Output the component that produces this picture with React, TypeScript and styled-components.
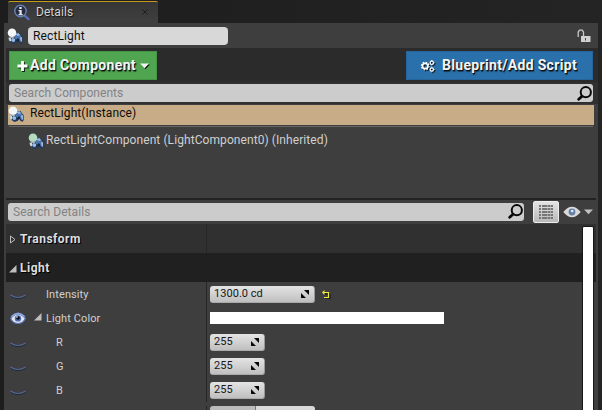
import React from "react";
import styled, { createGlobalStyle } from "styled-components";

const Global = createGlobalStyle`
  * { box-sizing: border-box; }
  body {
    margin: 0;
    background: #202020;
    font-family: Roboto, "Liberation Sans", sans-serif;
    font-size: 12px;
    overflow: hidden;
  }
  svg { display: block; flex: none; }
`;

const Window = styled.div`
  width: 602px;
  height: 410px;
  overflow: hidden;
  display: flex;
  flex-direction: column;
  background: linear-gradient(90deg, #1d1d1d, #242424);
`;

const TabStrip = styled.div`
  height: 23px;
  flex: none;
  padding: 1px 0 0 8px;
`;

const Tab = styled.div`
  display: flex;
  align-items: center;
  width: 150px;
  height: 22px;
  padding: 0 10px 1px 5px;
  border-top: 1px solid #c59b19;
  border-radius: 2px 2px 0 0;
  background: linear-gradient(#363636, #404040);
`;

const TabTitle = styled.span`
  margin-left: 6px;
  flex: 1;
  color: #d2d2d2;
  letter-spacing: 0.06px;
  text-shadow: 1px 1px 1px #111;
`;

const Panel = styled.div`
  flex: 1;
  width: 594px;
  margin-left: 4px;
  display: flex;
  flex-direction: column;
  background: #3e3e3e;
`;

const NameBar = styled.div`
  height: 25px;
  flex: none;
  display: flex;
  align-items: center;
  padding: 0 7px 0 3px;
`;

const NameField = styled.div`
  width: 200px;
  height: 18px;
  margin: 0 auto 0 5px;
  padding-left: 5px;
  line-height: 18px;
  border-radius: 4px;
  background: #d8d8d8;
  color: #111;
  letter-spacing: 0.12px;
`;

const Toolbar = styled.div`
  height: 34px;
  flex: none;
  display: flex;
  justify-content: space-between;
  margin-left: 2px;
  padding: 3px 5px 2px 3px;
  background: #2b2b2b;
`;

const ActionButton = styled.div<{ $tone: "green" | "blue" }>`
  display: flex;
  align-items: center;
  width: ${(p) => (p.$tone === "green" ? 148 : 187)}px;
  height: 29px;
  padding-left: ${(p) => (p.$tone === "green" ? 7 : 13)}px;
  background: ${(p) => (p.$tone === "green" ? "#50a650" : "#2a70aa")};
  border: 1px solid ${(p) => (p.$tone === "green" ? "#459345" : "#25659b")};
  svg { filter: drop-shadow(1px 1px 0 rgba(0, 0, 0, 0.8)); }
`;

const ActionLabel = styled.span<{ $gap: number; $spacing: number }>`
  margin: 0 4px 1px ${(p) => p.$gap}px;
  color: #f4f4f4;
  font-size: 14px;
  font-weight: 700;
  letter-spacing: ${(p) => p.$spacing}px;
  text-shadow: 1px 1px 0 #101010, 1px 2px 1px rgba(0, 0, 0, 0.5);
  white-space: nowrap;
`;

const SearchRow = styled.div<{ $dark?: boolean }>`
  height: ${(p) => (p.$dark ? 22 : 23)}px;
  flex: none;
  display: flex;
  align-items: center;
  margin-left: 2px;
  padding: 0 5px 0 ${(p) => (p.$dark ? 3 : 2)}px;
  background: ${(p) => (p.$dark ? "#303030" : "#3e3e3e")};
`;

const SearchBox = styled.div<{ $width: number }>`
  display: flex;
  flex: none;
  align-items: center;
  justify-content: space-between;
  width: ${(p) => p.$width}px;
  height: 18px;
  padding: 0 1px 0 5px;
  border-radius: 3px;
  background: #cccccc;
  color: #838383;
  letter-spacing: 0.06px;
`;

const Tree = styled.div`
  height: 94px;
  flex: none;
  padding: 1px 4px 0;
`;

const TreeRow = styled.div<{ $selected?: boolean }>`
  display: flex;
  align-items: center;
  height: ${(p) => (p.$selected ? 20 : 24)}px;
  padding-left: ${(p) => (p.$selected ? 0 : 20)}px;
  background: ${(p) => (p.$selected ? "#c8ac87" : "transparent")};
  color: ${(p) => (p.$selected ? "#0c0c0c" : "#d0d0d0")};
  svg { margin-top: ${(p) => (p.$selected ? -3 : 1)}px; }
`;

const TreeLabel = styled.span<{ $gap: number; $lift?: boolean }>`
  margin-left: ${(p) => p.$gap}px;
  padding-bottom: ${(p) => (p.$lift ? 4 : 0)}px;
  letter-spacing: 0.08px;
`;

const TreeRule = styled.div`
  height: 1px;
  margin: 1px 1px 1px;
  background: #666;
`;

const Divider = styled.div`
  height: 2px;
  flex: none;
  margin: 0 2px;
  background: #232121;
`;

const ViewToggle = styled.div`
  display: grid;
  flex: none;
  place-items: center;
  width: 26px;
  height: 22px;
  margin: 0 4px 0 9px;
  border: 1px solid #eee;
  border-radius: 2px;
  background: linear-gradient(#e3e3e3, #b9b9b9);
`;

const FilterMenu = styled.div`
  display: flex;
  align-items: center;
  gap: 3px;
`;

const Properties = styled.div`
  position: relative;
  flex: 1;
  margin: 1px 2px 0;
  overflow: hidden;
`;

const Section = styled.div<{ $open?: boolean }>`
  display: grid;
  grid-template-columns: 200px 1fr;
  height: 29px;
  background: ${(p) => (p.$open ? "#202020" : "#303030")};
`;

const SectionTitle = styled.div`
  display: flex;
  align-items: center;
  padding: 0 0 0 3px;
  color: #dedede;
  font-weight: 700;
  font-size: 12px;
  letter-spacing: 0.5px;
  text-shadow: 1px 1px 0 #000;
  svg { width: 8px; margin-top: 2px; }
  span { margin-left: 3px; }
`;

const ValueCell = styled.div`
  display: flex;
  align-items: center;
  padding-left: 3px;
  border-left: 1px solid #262626;
`;

const Row = styled.div`
  display: grid;
  grid-template-columns: 200px 1fr;
  height: 24px;
`;

const NameCell = styled.div<{ $indent: number }>`
  display: flex;
  align-items: center;
  padding-left: 4px;
  color: #d0d0d0;
  font-size: 11px;
  > span { margin-left: ${(p) => p.$indent}px; letter-spacing: 0.1px; }
`;

const Expander = styled.div`
  margin: -3px -1px 0 8px;
`;

const NumberBox = styled.div<{ $wide?: boolean }>`
  display: flex;
  align-items: center;
  justify-content: space-between;
  width: ${(p) => (p.$wide ? 105 : 55)}px;
  height: 17px;
  margin-right: 7px;
  padding: 0 5px 0 4px;
  border-radius: 3px;
  background: linear-gradient(#e4e4e4, #bfbfbf);
  border-right: 1px solid #999;
  border-bottom: 1px solid #aaa;
  color: #171717;
  font-size: 11px;
  letter-spacing: 0.04px;
`;

const Swatch = styled.div`
  width: 234px;
  height: 12px;
  background: #fff;
`;

const SliderBox = styled.div`
  align-self: start;
  width: 105px;
  height: 17px;
  border-radius: 3px;
  background: linear-gradient(90deg, #bbb 0 45px, #777 45px 46px, #d8d8d8 46px);
`;

const SliderRow = styled(Row)`
  padding-top: 4px;
`;

const ScrollThumb = styled.div`
  position: absolute;
  top: 2px;
  right: 2px;
  width: 12px;
  height: 200px;
  border: 1px solid #171717;
  border-radius: 2px;
  background: #fff;
`;

const LightIcon = ({ tint = "#f4f6f8" }: { tint?: string }) => (
  <svg width="16" height="16" viewBox="0 0 16 16">
    <path d="M3 8l4 0 2-3h3.5l2 3 1.2 1v5l-1 1.7-2.2-.7-1-2-2 2-3 1-3-2z" fill="#22395e" />
    <path d="M8 5.5l3.5-.5 2.5 3v4l-2 1-4-2z" fill="#4c75ae" />
    <path d="M8.5 6l3-.8 1.6 2-2.4.8zM5 10l3 .8v2.5l-2 1-2-2zM13 9.5l2-.5v4.5l-1.3.5z" fill="#9bbce2" />
    <path d="M1.5 9.5l2.5.5v3.5l-2-1z" fill="#ccd9dc" />
    <path d="M9 12l2-2 1.5 2-1 1.3-1.5-.3z" fill="#14233a" />
    <circle cx="5" cy="4.8" r="4.3" fill={tint} />
    <path d="M1.8 7.8q3.2 2.5 6.3 0L7 10H3z" fill="#a2adb2" />
  </svg>
);

const InfoIcon = () => (
  <svg width="17" height="17" viewBox="0 0 17 17">
    <path d="M11.5 11.5l4 3.7" stroke="#536eb2" strokeWidth="2.4" strokeLinecap="round" />
    <circle cx="7.5" cy="7" r="5.7" fill="#252c40" stroke="#6680b9" strokeWidth="1.4" />
    <path d="M6.3 3h2.4v2H6.3zM5.5 6h3.2v4h1v1.3H5.5V10h1V7.2h-1z" fill="#e5e5e5" />
  </svg>
);

const LockIcon = () => (
  <svg width="14" height="14" viewBox="0 0 14 14">
    <path d="M1.2 8V3l1.3-1.8h2.7L6.5 3v4" fill="none" stroke="#c7c7c7" strokeWidth="1.3" />
    <path d="M4 7h9.5v6H4z" fill="#d0d0d0" />
    <path d="M8 9h1v2.4H8z" fill="#444" />
  </svg>
);

const GearsIcon = () => (
  <svg width="16" height="14" viewBox="0 0 16 14" fill="none" stroke="#fff">
    <circle cx="5.2" cy="7" r="2.7" strokeWidth="1.7" />
    <circle cx="5.2" cy="7" r="3.8" strokeWidth="1.2" strokeDasharray="1.5 1.48" />
    <circle cx="11.8" cy="3.8" r="1.7" strokeWidth="1.2" />
    <circle cx="11.8" cy="10.5" r="1.7" strokeWidth="1.2" />
    <path d="M11.8 1v1M11.8 5.5v1M11.8 7.8v1M11.8 12.3v1M13.6 3.8h1M13.6 10.5h1" />
  </svg>
);

const PlusIcon = () => (
  <svg width="11" height="10" viewBox="0 0 11 10">
    <path d="M5.5 0v10M.5 5h10" stroke="#fff" strokeWidth="2.8" />
  </svg>
);

const SearchIcon = () => (
  <svg width="15" height="15" viewBox="0 0 15 15" fill="none" stroke="#080808">
    <circle cx="8.8" cy="6.2" r="5.1" strokeWidth="2" />
    <path d="M5 10.2l-3.3 3" strokeWidth="2.8" strokeLinecap="round" />
  </svg>
);

const CaretDown = ({ fill = "#f4f4f4" }: { fill?: string }) => (
  <svg width="9" height="6" viewBox="0 0 9 6">
    <path d="M0 .5h9L4.5 5.2z" fill={fill} />
  </svg>
);

const ListIcon = () => (
  <svg width="14" height="14" viewBox="0 0 14 14" stroke="#777" strokeWidth="2">
    <path d="M0 1h14M0 4h14M0 7h14M0 10h14M0 13h14" strokeDasharray="2 1 5 .5 2.5 .5 3" />
  </svg>
);

const FilterEye = () => (
  <svg width="18" height="12" viewBox="0 0 18 12">
    <path d="M.3 6Q9-4.5 17.7 6 9 16.5.3 6z" fill="#dadada" />
    <circle cx="9" cy="6" r="3.4" fill="#6680a5" />
    <circle cx="9.2" cy="5" r="1.3" fill="#ddecff" />
  </svg>
);

const OpenEye = () => (
  <svg width="16" height="13" viewBox="0 0 16 13">
    <path d="M.6 6.5Q8-2.5 15.4 6.5 13 11.5 8 11.5 3 11.5.6 6.5z" fill="#e4e7ee" stroke="#5876bd" strokeWidth="1.2" />
    <path d="M1.2 4.8Q8-2 14.8 4.8" fill="none" stroke="#8aa6e5" strokeWidth="1.5" />
    <circle cx="8" cy="6.4" r="3.2" fill="#516eaa" />
    <circle cx="8" cy="6" r="1.8" fill="#080d19" />
    <circle cx="7" cy="5" r=".8" fill="#fff" />
  </svg>
);

const ClosedEye = () => (
  <svg width="16" height="13" viewBox="0 0 16 13" fill="none">
    <path d="M1 8Q8 12.5 15 8" stroke="#252c3a" strokeWidth="2" />
    <path d="M.5 7Q8 12 15.5 7" stroke="#546994" strokeWidth="1.1" />
  </svg>
);

const OpenArrow = () => (
  <svg width="8" height="8" viewBox="0 0 8 8">
    <path d="M7.5 0v7.5H0z" fill="#bebebe" />
  </svg>
);

const ClosedArrow = () => (
  <svg width="8" height="9" viewBox="0 0 8 9">
    <path d="M1.5 1v7L6 4.5z" fill="none" stroke="#bebebe" />
  </svg>
);

const DragIcon = () => (
  <svg width="8" height="8" viewBox="0 0 8 8">
    <path d="M3 0h5v5zM0 3l5 5H0z" fill="#080808" />
  </svg>
);

const ResetIcon = () => (
  <svg width="9" height="9" viewBox="0 0 9 9" fill="none">
    <path d="M3 4h5v5H3M1 3h3" stroke="#111" />
    <path d="M1 2.5h5.5v5H2" stroke="#eee942" strokeWidth="1.2" />
    <path d="M0 2.5L2.5 0v5z" fill="#eee942" />
  </svg>
);

const CloseIcon = () => (
  <svg width="6" height="6" viewBox="0 0 6 6">
    <path d="M.5.5l5 5M5.5.5l-5 5" stroke="#1d1d1d" />
  </svg>
);

export default function App() {
  return (
    <Window>
      <Global />
      <TabStrip>
        <Tab>
          <InfoIcon />
          <TabTitle>Details</TabTitle>
          <CloseIcon />
        </Tab>
      </TabStrip>
      <Panel>
        <NameBar>
          <LightIcon />
          <NameField>RectLight</NameField>
          <LockIcon />
        </NameBar>
        <Toolbar>
          <ActionButton $tone="green">
            <PlusIcon />
            <ActionLabel $gap={2} $spacing={0.33}>Add Component</ActionLabel>
            <CaretDown />
          </ActionButton>
          <ActionButton $tone="blue">
            <GearsIcon />
            <ActionLabel $gap={6} $spacing={0.32}>Blueprint/Add Script</ActionLabel>
          </ActionButton>
        </Toolbar>
        <SearchRow $dark>
          <SearchBox $width={584}>Search Components<SearchIcon /></SearchBox>
        </SearchRow>
        <Tree>
          <TreeRow $selected>
            <LightIcon />
            <TreeLabel $gap={6} $lift>RectLight(Instance)</TreeLabel>
          </TreeRow>
          <TreeRule />
          <TreeRow>
            <LightIcon tint="#b4dac0" />
            <TreeLabel $gap={2}>RectLightComponent (LightComponent0) (Inherited)</TreeLabel>
          </TreeRow>
        </Tree>
        <Divider />
        <SearchRow>
          <SearchBox $width={516}>Search Details<SearchIcon /></SearchBox>
          <ViewToggle><ListIcon /></ViewToggle>
          <FilterMenu>
            <FilterEye />
            <CaretDown fill="#c0c0c0" />
          </FilterMenu>
        </SearchRow>
        <Properties>
          <Section>
            <SectionTitle><ClosedArrow /><span>Transform</span></SectionTitle>
            <ValueCell />
          </Section>
          <Section $open>
            <SectionTitle><OpenArrow /><span>Light</span></SectionTitle>
          </Section>
          <Row>
            <NameCell $indent={20}><ClosedEye /><span>Intensity</span></NameCell>
            <ValueCell>
              <NumberBox $wide>1300.0 cd<DragIcon /></NumberBox>
              <ResetIcon />
            </ValueCell>
          </Row>
          <Row>
            <NameCell $indent={5}>
              <OpenEye />
              <Expander><OpenArrow /></Expander>
              <span>Light Color</span>
            </NameCell>
            <ValueCell><Swatch /></ValueCell>
          </Row>
          {["R", "G", "B"].map((channel) => (
            <Row key={channel}>
              <NameCell $indent={30}><ClosedEye /><span>{channel}</span></NameCell>
              <ValueCell><NumberBox>255<DragIcon /></NumberBox></ValueCell>
            </Row>
          ))}
          <SliderRow>
            <NameCell $indent={0} />
            <ValueCell><SliderBox /></ValueCell>
          </SliderRow>
          <ScrollThumb />
        </Properties>
      </Panel>
    </Window>
  );
}
